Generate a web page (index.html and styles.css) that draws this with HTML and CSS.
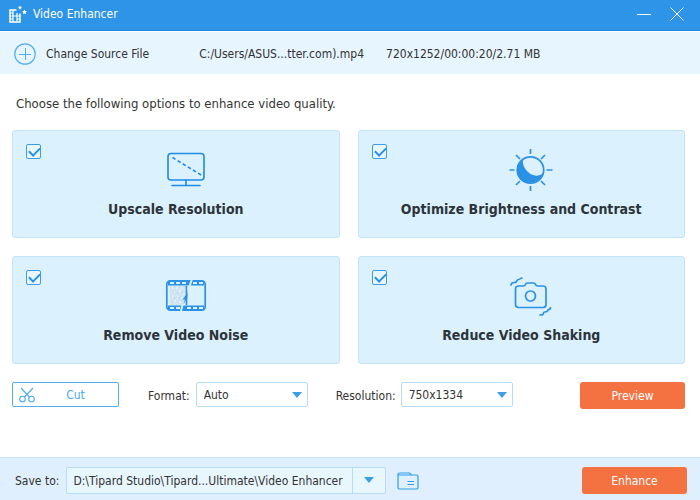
FILE: index.html
```html
<!DOCTYPE html>
<html lang="en">
<head>
<meta charset="utf-8">
<title>Video Enhancer</title>
<link rel="stylesheet" href="styles.css">
</head>
<body>
<header class="titlebar">
  <svg class="logo" width="19" height="20" viewBox="0 0 19 20" fill="none" stroke="#fff" aria-hidden="true">
    <path d="M8.500 6H2V18H12V9.500" stroke-width="1.500"/>
    <path d="M5 6V18M9 9V18" stroke-width="1.200"/>
    <path d="M2 9H5M2 12H12M2 15H5M9 15H12" stroke-width="1.200"/>
    <path d="M12 1.500l.6 1.300 1.400.2-1 1 .2 1.400-1.200-.7-1.200.7.2-1.400-1-1 1.400-.2zM16.500 5.500l.7 1.600 1.700.2-1.200 1.200.2 1.700-1.400-.8-1.500.8.3-1.700-1.200-1.200 1.700-.2z" fill="#fff" stroke="none"/>
  </svg>
  <h1 class="app-name">Video Enhancer</h1>
  <button class="window-button" type="button" aria-label="Minimize">
    <svg width="14" height="14" viewBox="0 0 14 14" stroke="#fff"><path d="M0 7.500H14"/></svg>
  </button>
  <button class="window-button" type="button" aria-label="Close">
    <svg width="14" height="14" viewBox="0 0 14 14" stroke="#fff"><path d="M.5.5l13 13M13.500.5l-13 13"/></svg>
  </button>
</header>

<section class="source">
  <button class="source-button" type="button">
    <svg width="22" height="22" viewBox="0 0 22 22" fill="none" stroke="#55aee9" aria-hidden="true">
      <circle cx="11" cy="11" r="10.200" stroke-width="1.200"/><path d="M5 11.500H17M11.500 5V17"/>
    </svg>
    Change Source File
  </button>
  <span class="source-path">C:/Users/ASUS...tter.com).mp4</span>
  <span>720x1252/00:00:20/2.71 MB</span>
</section>

<main class="content">
  <p class="prompt">Choose the following options to enhance video quality.</p>
  <div class="options">
    <label class="card">
      <input class="check" type="checkbox" checked>
      <svg class="card-icon" width="48" height="44" viewBox="0 0 48 44" fill="none" stroke="#1e8ae6" stroke-width="1.600" stroke-linecap="round" aria-hidden="true">
        <rect x="6" y="6.500" width="36" height="26.500" rx="3"/>
        <path d="M24 33v5M10 38.500H38"/>
        <path d="M10.500 10.500L40 28.500" stroke-dasharray="3.500 2.500" stroke-linecap="butt"/>
      </svg>
      <span class="card-title">Upscale Resolution</span>
    </label>
    <label class="card">
      <input class="check" type="checkbox" checked>
      <svg class="card-icon" width="48" height="44" viewBox="0 0 48 44" fill="none" stroke="#2b91e5" stroke-width="1.700" aria-hidden="true">
        <circle cx="23.500" cy="23" r="13.200"/>
        <path d="M16.500 12.500C8.500 18 7.500 28 14.500 33c8 6 19 2 21.500-7C31.500 30.500 24.500 29 20 24 16.500 20 15 16 16.500 12.500z" fill="#2b91e5" stroke="none"/>
        <path d="M23.500 2v5M23.500 39v5M2.500 23h5M39.500 23h6M9 8l4 4M38 8l-4 4M9 38l4-4M38 38l-4-4"/>
      </svg>
      <span class="card-title">Optimize Brightness and Contrast</span>
    </label>
    <label class="card">
      <input class="check" type="checkbox" checked>
      <svg class="card-icon" width="48" height="44" viewBox="0 0 48 44" fill="none" stroke="#2b91e5" aria-hidden="true">
        <rect x="4.800" y="7.800" width="38.400" height="29.400" rx="3.500" stroke-width="1.700"/>
        <path d="M6 10.200H42M6 34.800H42" stroke-width="4.500"/>
        <path d="M8 10H12M14 10H18M20 10H24M31 10H35M37 10H41M8 35H12M14 35H18M25 35H29M31 35H35M37 35H41" stroke="#dbf1fe" stroke-width="1.800"/>
        <path d="M8 13H24V27L21 32H8z" fill="#cfe3f1" stroke="none"/>
        <path d="M10 15h2M14 14h2M19 15h2M12 19h1M17 18h2M21 21h2M10 23h2M15 23h1M19 25h2M12 28h2M17 29h2M15 26h1M14 16h1" stroke="#f2faff"/>
        <path d="M12 14h1M17 14h1M11 18h1M15 20h1M20 19h1M12 25h1M17 25h1M10 29h1M20 28h1" stroke="#b0cfe6"/>
        <path d="M24.500 13V32" stroke-width="1.700"/>
        <path d="M30 6L28 12 25.800 17M20.500 32L19 38" stroke="#dbf1fe" stroke-width="2"/>
        <path d="M25.500 20L20.500 26.500H23L21.500 31.500 25.500 24z" fill="#2b91e5" stroke="none"/>
      </svg>
      <span class="card-title">Remove Video Noise</span>
    </label>
    <label class="card">
      <input class="check" type="checkbox" checked>
      <svg class="card-icon" width="48" height="44" viewBox="0 0 48 44" fill="none" stroke="#2b91e5" stroke-width="1.700" stroke-linecap="round" stroke-linejoin="round" aria-hidden="true">
        <path d="M11.500 13H16Q18 13 18.500 11.500 19 10 20.500 10H26.500Q28 10 28.500 11.500 29 13 31 13H36Q39 13 39 16V31.500Q39 34.500 36 34.500H11.500Q8.500 34.500 8.500 31.500V16Q8.500 13 11.500 13z"/>
        <circle cx="23.500" cy="23" r="5"/>
        <path d="M4 12C4.500 9 6 9.500 8 9.500S9.500 6.500 11.500 6.500 13 5 15 5M33 42C36 42 36.500 41.500 36.500 40S38.500 39 40 38.500 40 36.500 41.500 36.500 43.500 36 43.500 34.500"/>
      </svg>
      <span class="card-title">Reduce Video Shaking</span>
    </label>
  </div>

  <div class="controls">
    <button class="cut" type="button">
      <svg width="16" height="16" viewBox="0 0 16 16" fill="none" stroke="#4babed" stroke-width="1.100" aria-hidden="true">
        <circle cx="3.500" cy="12" r="2.800"/><circle cx="12.500" cy="12" r="2.800"/>
        <path d="M2 1L10.500 10M14 1L5.500 10"/>
      </svg>
      <span class="cut-text">Cut</span>
    </button>
    <label class="field-label format-label" for="format">Format:</label>
    <span class="picker"><select class="select" id="format"><option>Auto</option></select></span>
    <label class="field-label resolution-label" for="resolution">Resolution:</label>
    <span class="picker"><select class="select" id="resolution"><option>750x1334</option></select></span>
    <button class="primary" type="button">Preview</button>
  </div>
</main>

<footer class="footer">
  <label for="save">Save to:</label>
  <span class="picker save-picker"><select class="select" id="save"><option>D:\Tipard Studio\Tipard...Ultimate\Video Enhancer</option></select></span>
  <button class="folder" type="button" aria-label="Open folder">
    <svg width="22" height="18" viewBox="0 0 22 18" fill="none" stroke="#2f9de9" stroke-width="1.200">
      <path d="M1 15.500V3Q1 1 3 1H12.500L14.500 3H19.500Q21 3 21 4.500V15.500Q21 17 19.500 17H2.500Q1 17 1 15.500zM1.500 3H14.500M10.500 9.500H17M10.500 12.500H17"/>
    </svg>
  </button>
  <button class="primary" type="button">Enhance</button>
</footer>
</body>
</html>
```
FILE: styles.css
```css
* {
  box-sizing: border-box;
}

body {
  display: flex;
  flex-direction: column;
  min-height: 100vh;
  margin: 0;
  background: #fff;
  color: #333;
  font: 12px/16px "DejaVu Sans Condensed", "DejaVu Sans", sans-serif;
}

button,
select {
  margin: 0;
  padding: 0;
  border: 0;
  background: none;
  color: inherit;
  font: inherit;
}

svg {
  display: block;
}

.titlebar {
  display: flex;
  align-items: center;
  height: 31px;
  padding: 0 8px 3px;
  border-bottom: 1px solid #1c85dc;
  background: #2d94e8;
  color: #fff;
}

.logo {
  margin-right: 6px;
}

.app-name {
  flex: 1;
  margin: 0;
  font-size: 12px;
  font-weight: normal;
}

.window-button {
  display: grid;
  place-items: center;
  width: 30px;
  height: 26px;
  margin-left: 3px;
}

.source {
  display: flex;
  align-items: center;
  height: 43px;
  padding: 2px 14px 0;
  border-top: 1px solid #fff;
  background: #e6f5fe;
}

.source-button {
  display: flex;
  align-items: center;
  gap: 10px;
}

.source-path {
  margin: 0 22px 0 50px;
}

.content {
  flex: 1;
  padding: 20px 15px 0 12px;
}

.prompt {
  margin: 0 0 16px 4px;
  font-size: 13px;
  line-height: 20px;
}

.options {
  display: grid;
  grid-template-columns: 1fr 1fr;
  gap: 18px;
}

.card {
  position: relative;
  display: flex;
  flex-direction: column;
  align-items: center;
  height: 108px;
  padding-top: 16px;
  border: 1px solid #c3e4f7;
  border-radius: 3px;
  background: #dbf1fe;
}

.card-icon {
  margin-left: 20px;
}

.check {
  position: absolute;
  top: 13px;
  left: 13px;
  width: 15px;
  height: 15px;
  margin: 0;
  border: 1px solid #3c9ce9;
  border-radius: 2px;
  background: #e8f6fe;
  appearance: none;
}

.check:checked::before {
  content: "";
  display: block;
  width: 9px;
  height: 5px;
  margin: 2px;
  border: solid #2b8fe4;
  border-width: 0 0 2px 2px;
  transform: rotate(-45deg);
}

.card-title {
  margin-top: 8px;
  color: #2d3439;
  font-size: 14px;
  font-weight: bold;
  line-height: 20px;
}

.controls {
  display: flex;
  align-items: flex-start;
  margin-top: 18px;
}

.cut {
  display: flex;
  align-items: center;
  width: 107px;
  height: 25px;
  padding-left: 6px;
  border: 1px solid #55aeea;
  border-radius: 2px;
  color: #4babed;
}

.cut-text {
  flex: 1;
  padding-right: 2px;
}

.field-label {
  padding-top: 6px;
}

.format-label {
  margin: 0 6px 0 29px;
}

.resolution-label {
  margin: 0 5px 0 28px;
}

.picker {
  position: relative;
  width: 112px;
}

.picker::after {
  content: "";
  position: absolute;
  top: 10px;
  right: 6px;
  border: 5px solid transparent;
  border-top: 6px solid #3c9fe5;
  border-bottom: 0;
  pointer-events: none;
}

.select {
  display: block;
  width: 100%;
  height: 25px;
  padding: 0 24px 0 7px;
  border: 1px solid #b7dcf6;
  border-radius: 2px;
  background: #fff;
  appearance: none;
}

.primary {
  width: 105px;
  height: 27px;
  margin-left: auto;
  border-radius: 3px;
  background: #f47141;
  color: #fff;
}

.footer {
  display: flex;
  align-items: center;
  height: 43px;
  padding: 3px 13px 0 15px;
  border-top: 1px solid #c8e2f9;
  background: #dfeffd;
}

.save-picker {
  width: 320px;
  margin: 0 11px 0 7px;
}

.save-picker .select {
  height: 27px;
  padding: 0 33px 0 6px;
  background: linear-gradient(to left, transparent 32px, #b7dcf6 32px 33px, transparent 33px) #e8f6fe;
}

.save-picker::after {
  right: 12px;
}
```
